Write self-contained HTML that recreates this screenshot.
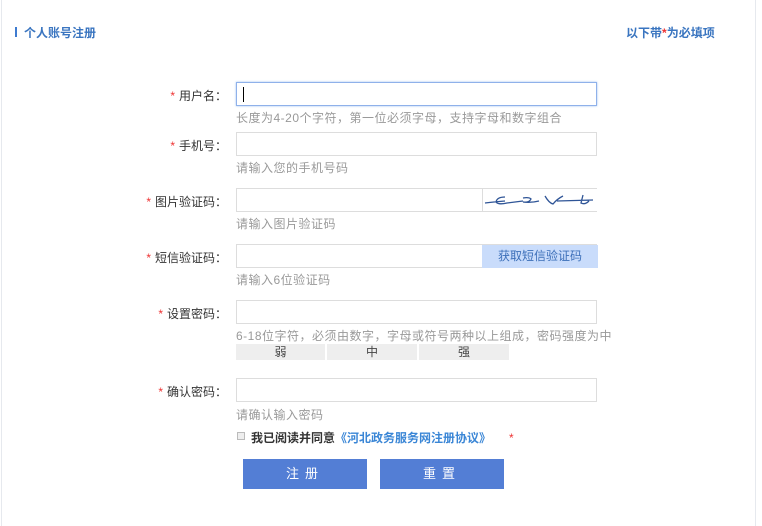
<!DOCTYPE html>
<html><head><meta charset="utf-8"><style>
body{margin:0;width:762px;height:526px;background:#fff;position:relative;overflow:hidden;font-family:"Liberation Sans","Noto Sans CJK SC",sans-serif;font-size:12px;color:#333}
.a{position:absolute}
.in{position:absolute;left:236px;width:359px;height:22px;border:1px solid #ddd;background:#fff}
.lb{position:absolute;right:535px;text-align:right;white-space:nowrap;color:#333}
.lb i{color:#e33;font-style:normal;margin-right:4px}
.h{position:absolute;left:236px;color:#999;white-space:nowrap;letter-spacing:0.5px}
.bar{position:absolute;top:344px;height:16px;background:#eee;text-align:center;line-height:16px;color:#444}
.btn{position:absolute;top:459px;width:124px;height:30px;background:#537ed5;color:#fff;text-align:center;line-height:30px;font-size:13px;letter-spacing:6px}
</style></head><body>
<div class="a" style="left:1px;top:0;width:1px;height:526px;background:#e6e9ee"></div>
<div class="a" style="left:755px;top:0;width:1px;height:526px;background:#e6e9ee"></div>
<div class="a" style="left:15px;top:27px;width:2px;height:10px;background:#3e7bd0"></div>
<div class="a" style="left:24px;top:24px;color:#3a75c0;font-weight:bold;font-size:12px">个人账号注册</div>
<div class="a" style="left:626px;top:24px;color:#3a75c0;font-weight:bold;font-size:12px">以下带<span style="color:#e33">*</span>为必填项</div>

<div class="lb" style="top:87px"><i>*</i>用户名：</div>
<div class="in" style="top:82px;border-color:#8fb1ea;box-shadow:0 0 2px #9cc0f0"><div class="a" style="left:6px;top:4px;width:1px;height:15px;background:#000"></div></div>
<div class="h" style="top:109px">长度为4-20个字符，第一位必须字母，支持字母和数字组合</div>

<div class="lb" style="top:137px"><i>*</i>手机号：</div>
<div class="in" style="top:132px"></div>
<div class="h" style="top:159px">请输入您的手机号码</div>

<div class="lb" style="top:193px"><i>*</i>图片验证码：</div>
<div class="in" style="top:188px"></div>
<div class="a" style="left:482px;top:189px;width:115px;height:22px;border-left:1px solid #ddd;background:#fff">
<svg width="115" height="22"><path d="M2 14 Q10 13 22 12 M22 8 Q14 8 13 13 Q15 16 24 14 L40 12 M40 9 Q46 8 48 10 Q46 14 40 13 Q48 14 56 12 M62 7 Q66 14 70 15 Q74 10 80 7 M74 12 L110 11 M100 6 L98 14 Q102 16 106 12" stroke="#2f5597" stroke-width="1.3" fill="none"/></svg></div>
<div class="h" style="top:215px">请输入图片验证码</div>

<div class="lb" style="top:249px"><i>*</i>短信验证码：</div>
<div class="in" style="top:244px"></div>
<div class="a" style="left:482px;top:245px;width:116px;height:23px;background:#c9dcfb;color:#3c6fb9;text-align:center;line-height:23px">获取短信验证码</div>
<div class="h" style="top:271px">请输入6位验证码</div>

<div class="lb" style="top:305px"><i>*</i>设置密码：</div>
<div class="in" style="top:300px"></div>
<div class="h" style="top:327px">6-18位字符，必须由数字，字母或符号两种以上组成，密码强度为中</div>
<div class="bar" style="left:236px;width:89px">弱</div>
<div class="bar" style="left:327px;width:90px">中</div>
<div class="bar" style="left:419px;width:90px">强</div>

<div class="lb" style="top:383px"><i>*</i>确认密码：</div>
<div class="in" style="top:378px"></div>
<div class="h" style="top:406px">请确认输入密码</div>

<div class="a" style="left:237px;top:432px;width:6px;height:6px;border:1px solid #bbb;background:#eee"></div>
<div class="a" style="left:251px;top:429px;font-weight:bold;color:#333;white-space:nowrap">我已阅读并同意<span style="color:#3a86d6">《河北政务服务网注册协议》</span><span style="color:#e33;margin-left:18px;font-weight:normal">*</span></div>

<div class="btn" style="left:243px">注册</div>
<div class="btn" style="left:380px">重置</div>
</body></html>
